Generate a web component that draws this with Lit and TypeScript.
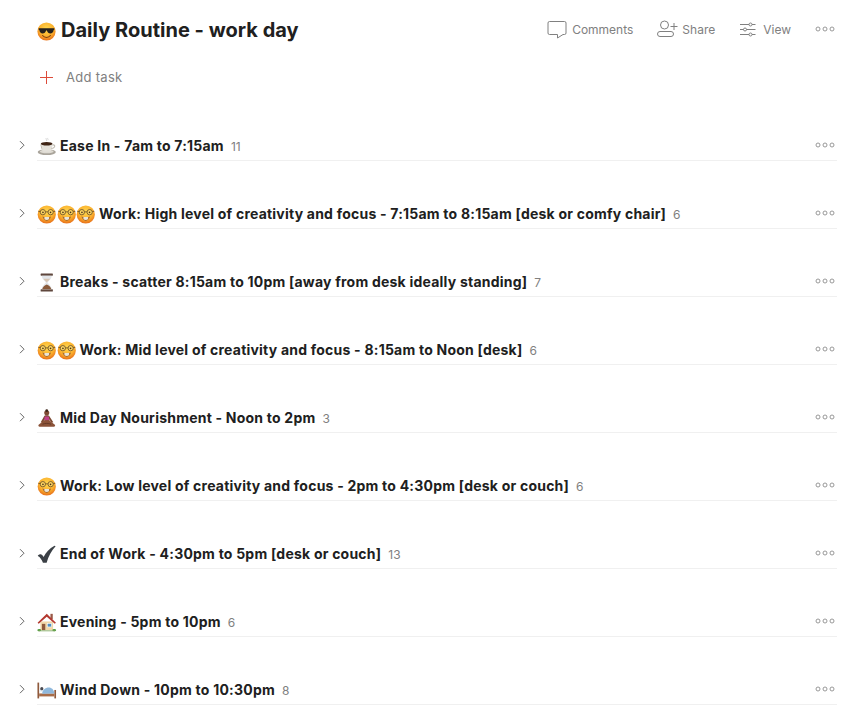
import { LitElement, css, html, svg } from 'lit';
import { customElement } from 'lit/decorators.js';

const faceGrad = svg`<defs><radialGradient id="face" cx="50%" cy="35%" r="62%"><stop offset="0" stop-color="#ffd84f"/><stop offset="0.65" stop-color="#fbb02d"/><stop offset="1" stop-color="#e9761c"/></radialGradient></defs>`;

const cool = html`<svg class="emoji" viewBox="0 0 18 18">${faceGrad}
  <circle cx="9" cy="9" r="8.600" fill="url(#face)"/>
  <path d="M1.600 6h14.800v1.300l-.6.300c-.2 2.200-1.500 3.200-3.100 3.200-1.700 0-2.800-1-3.300-2.800h-.8c-.5 1.800-1.600 2.800-3.300 2.800-1.600 0-2.900-1-3.100-3.200l-.6-.3z" fill="#26211d"/>
  <path d="M5.300 12.800c1 1.300 2.300 1.800 3.700 1.800s2.700-.5 3.700-1.800" fill="none" stroke="#7a3d10" stroke-width="1" stroke-linecap="round"/>
</svg>`;

const nerd = html`<svg class="emoji" viewBox="0 0 18 18">${faceGrad}
  <circle cx="9" cy="9" r="8.600" fill="url(#face)"/>
  <circle cx="5.300" cy="6.800" r="2.500" fill="#ffd761" stroke="#6b5026" stroke-width=".8"/>
  <circle cx="12.700" cy="6.800" r="2.500" fill="#ffd761" stroke="#6b5026" stroke-width=".8"/>
  <path d="M7.800 6.500h2.400M1 6l1.800.2M17 6l-1.800.2" stroke="#6b5026" stroke-width=".8"/>
  <circle cx="5.400" cy="6.900" r=".8" fill="#4a3420"/><circle cx="12.600" cy="6.900" r=".8" fill="#4a3420"/>
  <path d="M4.800 11c1.100 2.800 2.700 4.100 4.200 4.100s3.100-1.300 4.200-4.100c-2.700.7-5.700.7-8.400 0z" fill="#a8682e"/>
  <path d="M6.800 11.400h4.400v1.800c-.6.600-1.300.9-2.200.9s-1.600-.3-2.200-.9z" fill="#e9e4d6"/>
</svg>`;

const coffee = html`<svg class="emoji" viewBox="0 0 18 18">
  <path d="M8.500 1c-.8 1 .9 1.500.2 2.700M10 .9c-.6.8.6 1.200.1 2.100" fill="none" stroke="#cfcfcf" stroke-width=".8"/>
  <ellipse cx="9" cy="14.300" rx="8.600" ry="2.800" fill="#a9a49b"/>
  <ellipse cx="9" cy="13.700" rx="6.500" ry="1.700" fill="#dedad2"/>
  <path d="M3.400 6.500h11c0 3.500-.8 6.900-2.700 7.500H6.100c-1.900-.6-2.700-4-2.700-7.500z" fill="#e4e1da"/>
  <path d="M3.400 6.500c.2 1.800.7 3.800 1.500 5.400-.9-1-2.100-2.900-1.500-5.400z" fill="#9c978d"/>
  <ellipse cx="8.900" cy="6.400" rx="5.500" ry="1.700" fill="#3f2415"/>
  <path d="M14.300 7.600c2-.5 2.800.6 2 1.900-.6 1-1.700 1.400-3 1.400" fill="none" stroke="#bdb8ae" stroke-width="1"/>
</svg>`;

const hourglass = html`<svg class="emoji" viewBox="0 0 18 18">
  <rect x="3.200" y=".5" width="11.600" height="2" rx=".5" fill="#5f473d"/>
  <rect x="3.200" y="15.500" width="11.600" height="2" rx=".5" fill="#5f473d"/>
  <path d="M4.300 2.500h9.400c0 3.200-3.100 4.800-3.800 6.500.7 1.700 3.800 3.300 3.800 6.500H4.300c0-3.200 3.100-4.800 3.800-6.500-.7-1.700-3.800-3.300-3.800-6.500z" fill="#e3e6ea"/>
  <path d="M5.800 5.500h6.400c-.8 1.300-2.500 2.400-3.200 3.500-.7-1.100-2.400-2.200-3.200-3.500z" fill="#d9c6b4"/>
  <path d="M4.700 15.500c.2-2 2.500-3.800 4.300-4.500 1.800.7 4.100 2.500 4.300 4.500z" fill="#8a5a3a"/>
</svg>`;

const yoga = html`<svg class="emoji" viewBox="0 0 18 18">
  <circle cx="9" cy="3.600" r="2.400" fill="#7d4a32"/>
  <circle cx="9" cy="1.600" r="1.300" fill="#3a2418"/>
  <path d="M6.800 6.300c1.400-.5 3-.5 4.400 0l4 6.200-1.500.5-2.500-3.300v1.800H7.300V9.700L4.800 13l-1.500-.5z" fill="#7d4a32"/>
  <path d="M7 7h4l.4 3.800H6.600z" fill="#c2408a"/>
  <path d="M6.600 10.600h4.800l5.300 4.300c.6.800.1 1.800-1 1.800H2.300c-1.100 0-1.600-1-1-1.800z" fill="#8a5238"/>
  <path d="M5 14.400c2.500-1 5.500-1 8 0" fill="none" stroke="#5e3423" stroke-width=".8"/>
</svg>`;

const check = html`<svg class="emoji" viewBox="0 0 18 18">
  <path d="M.6 9.900c1-1 2.300-1.400 3.300-1 .9.400 1.600 1.300 2.100 2.400C8.100 7.300 11.500 3 16.300.6l1.100.6c-3.900 3.900-6.800 9.500-8.500 15.700H5.400C4.300 14 2.700 11.600.6 10.500z" fill="#3b4046"/>
</svg>`;

const house = html`<svg class="emoji" viewBox="0 0 18 18">
  <rect x="12.500" y=".8" width="2.200" height="5" fill="#9a5a48"/>
  <path d="M3 8h12v8.200H3z" fill="#f0d8aa"/>
  <path d="M9 .8.300 9.200l1.100 1.100L9 3.500l7.600 6.800 1.100-1.100z" fill="#b3382f"/>
  <rect x="4.400" y="10.300" width="3.200" height="5.900" fill="#8e5a3c"/>
  <rect x="9.500" y="10" width="4" height="3.200" fill="#4e8fc4" stroke="#fff" stroke-width=".5"/>
  <ellipse cx="1.900" cy="16.300" rx="1.800" ry="1.100" fill="#4f9a3c"/>
  <ellipse cx="16.100" cy="16.300" rx="1.800" ry="1.100" fill="#4f9a3c"/>
  <rect x="1" y="16.500" width="16" height=".8" fill="#7fa860"/>
</svg>`;

const bed = html`<svg class="emoji" viewBox="0 0 18 18">
  <rect x=".2" y="1.500" width="1.600" height="15" fill="#8f5a3c"/>
  <rect x="16.200" y="8.500" width="1.600" height="8" fill="#8f5a3c"/>
  <rect x="1.800" y="11.800" width="14.400" height="2.800" fill="#a86c48"/>
  <ellipse cx="4" cy="8.800" rx="2.100" ry="1.500" fill="#e8edf2"/>
  <circle cx="4.300" cy="7.300" r="1.500" fill="#4a4a50"/>
  <path d="M4.600 12c.2-3.200 3-5.800 6.400-5.800 2.800 0 4.800 2.200 5.200 5.600z" fill="#8fb8dc"/>
</svg>`;

const sections = [
  { icons: [coffee], title: 'Ease In - 7am to 7:15am', count: 11 },
  { icons: [nerd, nerd, nerd], title: 'Work: High level of creativity and focus - 7:15am to 8:15am [desk or comfy chair]', count: 6 },
  { icons: [hourglass], title: 'Breaks - scatter 8:15am to 10pm [away from desk ideally standing]', count: 7 },
  { icons: [nerd, nerd], title: 'Work: Mid level of creativity and focus - 8:15am to Noon [desk]', count: 6 },
  { icons: [yoga], title: 'Mid Day Nourishment - Noon to 2pm', count: 3 },
  { icons: [nerd], title: 'Work: Low level of creativity and focus - 2pm to 4:30pm [desk or couch]', count: 6 },
  { icons: [check], title: 'End of Work - 4:30pm to 5pm [desk or couch]', count: 13 },
  { icons: [house], title: 'Evening - 5pm to 10pm', count: 6 },
  { icons: [bed], title: 'Wind Down - 10pm to 10:30pm', count: 8 },
];

const dots = html`<svg class="dots" viewBox="0 0 20 6" width="20" height="6">
  <circle cx="3" cy="3" r="2" /><circle cx="10" cy="3" r="2" /><circle cx="17" cy="3" r="2" />
</svg>`;

@customElement('app-root')
export class AppRoot extends LitElement {
  static styles = css`
    :host {
      display: block;
      width: 866px;
      height: 721px;
      overflow: hidden;
      background: #fff;
      font-family: Inter, 'Liberation Sans', sans-serif;
      color: #202020;
    }

    .page {
      padding: 17px 29px 0 37px;
    }

    .header {
      display: flex;
      align-items: center;
      height: 26px;
    }

    h1 {
      flex: 1;
      display: flex;
      align-items: center;
      gap: 5px;
      margin: 0;
      font-size: 20px;
      line-height: 26px;
      font-weight: 700;
      letter-spacing: 0.02px;
    }

    h1 .emoji {
      width: 19px;
      margin-top: 2px;
    }

    .actions {
      display: flex;
      align-items: center;
      margin-top: -2px;
      color: #808080;
      font-size: 12px;
    }

    .action {
      display: flex;
      align-items: center;
    }

    .action svg {
      fill: none;
      stroke: #808080;
      stroke-width: 1;
    }

    .comments { gap: 5px; margin-right: 24px; }
    .share { gap: 2px; margin-right: 24px; }
    .view { gap: 7px; margin-right: 24px; }

    .add {
      display: flex;
      align-items: center;
      gap: 13px;
      margin-top: 21px;
      height: 26px;
      padding-left: 3px;
      font-size: 13px;
      letter-spacing: 0.3px;
      color: #808080;
    }

    .sections {
      margin-top: 42px;
    }

    .section {
      position: relative;
      display: flex;
      align-items: center;
      height: 28px;
      margin-bottom: 39px;
      border-bottom: 1px solid #f0f0f0;
    }

    .chevron {
      position: absolute;
      left: -18px;
      top: 7px;
      fill: none;
      stroke: #666;
      stroke-width: 1;
    }

    .icons {
      display: flex;
      margin-right: 3.5px;
    }

    .emoji {
      display: block;
      width: 19.5px;
      height: 19px;
      flex: none;
    }

    .name {
      font-size: 14px;
      font-weight: 700;
      line-height: 18px;
      letter-spacing: 0.22px;
      white-space: nowrap;
    }

    .count {
      margin-left: 7px;
      font-size: 12px;
      color: #808080;
    }

    .dots {
      display: block;
      margin-right: 2px;
      fill: none;
      stroke: #999;
      stroke-width: 1;
    }

    .section .dots {
      margin-left: auto;
      margin-top: -2px;
    }
  `;

  render() {
    return html`
      <div class="page">
        <div class="header">
          <h1>${cool}<span>Daily Routine - work day</span></h1>
          <div class="actions">
            <div class="action comments">
              <svg width="20" height="20" viewBox="0 0 20 20">
                <path d="M2.500 2.500h15a1.500 1.500 0 0 1 1.500 1.500v10a1.500 1.500 0 0 1-1.500 1.500h-1.500l-5.500 3.500v-3.500H2.500A1.500 1.500 0 0 1 1 14V4a1.500 1.500 0 0 1 1.500-1.500z" />
              </svg>
              Comments
            </div>
            <div class="action share">
              <svg width="23" height="20" viewBox="0 0 23 20">
                <circle cx="7.500" cy="6" r="4" />
                <rect x=".5" y="12.500" width="16" height="5" rx="2.500" />
                <path d="M13.500 7.500h7M17 4v7" />
              </svg>
              Share
            </div>
            <div class="action view">
              <svg width="17" height="17" viewBox="0 0 17 17">
                <path d="M1 3.500h9M13 3.500h3.500M1 8.500h3.500M7.500 8.500h9M1 13.500h9M13 13.500h3.500" />
                <circle cx="11.500" cy="3.500" r="1.500" />
                <circle cx="6" cy="8.500" r="1.500" />
                <circle cx="11.500" cy="13.500" r="1.500" />
              </svg>
              View
            </div>
            ${dots}
          </div>
        </div>
        <div class="add">
          <svg width="13" height="13" viewBox="0 0 13 13">
            <path d="M6.500 0v13M0 6.500h13" stroke="#dd4b39" stroke-width="1" fill="none" />
          </svg>
          Add task
        </div>
        <div class="sections">
          ${sections.map(
            (s) => html`
              <div class="section">
                <svg class="chevron" width="6" height="12" viewBox="0 0 6 12"><path d="M1 2.200 5 6.200l-4 4" /></svg>
                <div class="icons">${s.icons}</div>
                <span class="name">${s.title}</span>
                <span class="count">${s.count}</span>
                ${dots}
              </div>
            `
          )}
        </div>
      </div>
    `;
  }
}
